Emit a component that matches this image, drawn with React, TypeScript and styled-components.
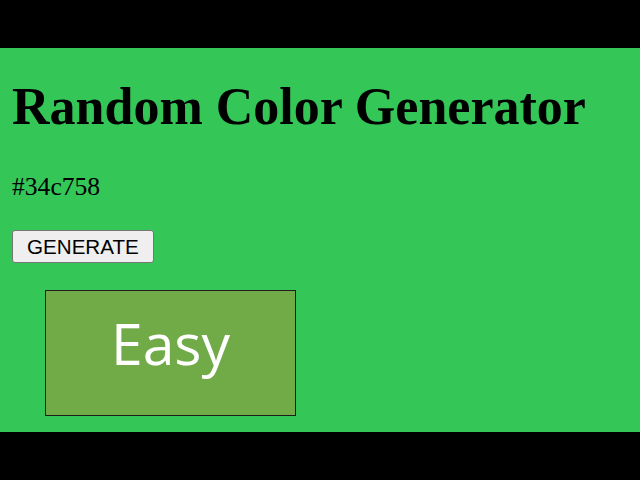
import React from 'react';
import styled, { createGlobalStyle } from 'styled-components';

const GlobalStyle = createGlobalStyle`
  html, body {
    margin: 0;
    padding: 0;
    background: #000;
  }
`;

const Frame = styled.div`
  width: 640px;
  height: 480px;
  display: flex;
  flex-direction: column;
  overflow: hidden;
`;

const Letterbox = styled.div`
  height: 48px;
  flex: none;
  background: #000;
`;

const Stage = styled.main<{ $bg: string }>`
  flex: 1;
  background: ${(p) => p.$bg};
  padding: 32.5px 0 0 12px;
  display: flex;
  flex-direction: column;
  align-items: flex-start;
`;

const Title = styled.h1`
  margin: 0;
  font-family: "Liberation Serif", "Times New Roman", serif;
  font-weight: 700;
  font-size: 52px;
  line-height: 1;
  color: #000;
  white-space: nowrap;
`;

const HexCode = styled.p`
  margin: 41px 0 0;
  font-family: "Liberation Serif", "Times New Roman", serif;
  font-size: 25.6px;
  line-height: 1;
  color: #000;
`;

const GenerateButton = styled.button`
  margin-top: 31px;
  height: 33px;
  padding: 0 14px;
  font-family: "Liberation Sans", Arial, sans-serif;
  font-size: 20.6px;
  color: #000;
  background: #efefef;
  border: 1px solid #767676;
  border-radius: 3px;
  cursor: pointer;
`;

const Badge = styled.div<{ $fill: string }>`
  margin: 27px 0 0 33px;
  box-sizing: border-box;
  width: 251px;
  height: 126px;
  padding-top: 23.5px;
  background: ${(p) => p.$fill};
  border: 1px solid #1c1c1c;
  text-align: center;
  font-family: "Open Sans", "Noto Sans", sans-serif;
  font-size: 57px;
  line-height: 1;
  color: #fff;
`;

export default function App() {
  const color = '#34c758';
  return (
    <>
      <GlobalStyle />
      <Frame>
        <Letterbox />
        <Stage $bg={color}>
          <Title>Random Color Generator</Title>
          <HexCode>{color}</HexCode>
          <GenerateButton>GENERATE</GenerateButton>
          <Badge $fill="#70ab47">Easy</Badge>
        </Stage>
        <Letterbox />
      </Frame>
    </>
  );
}
